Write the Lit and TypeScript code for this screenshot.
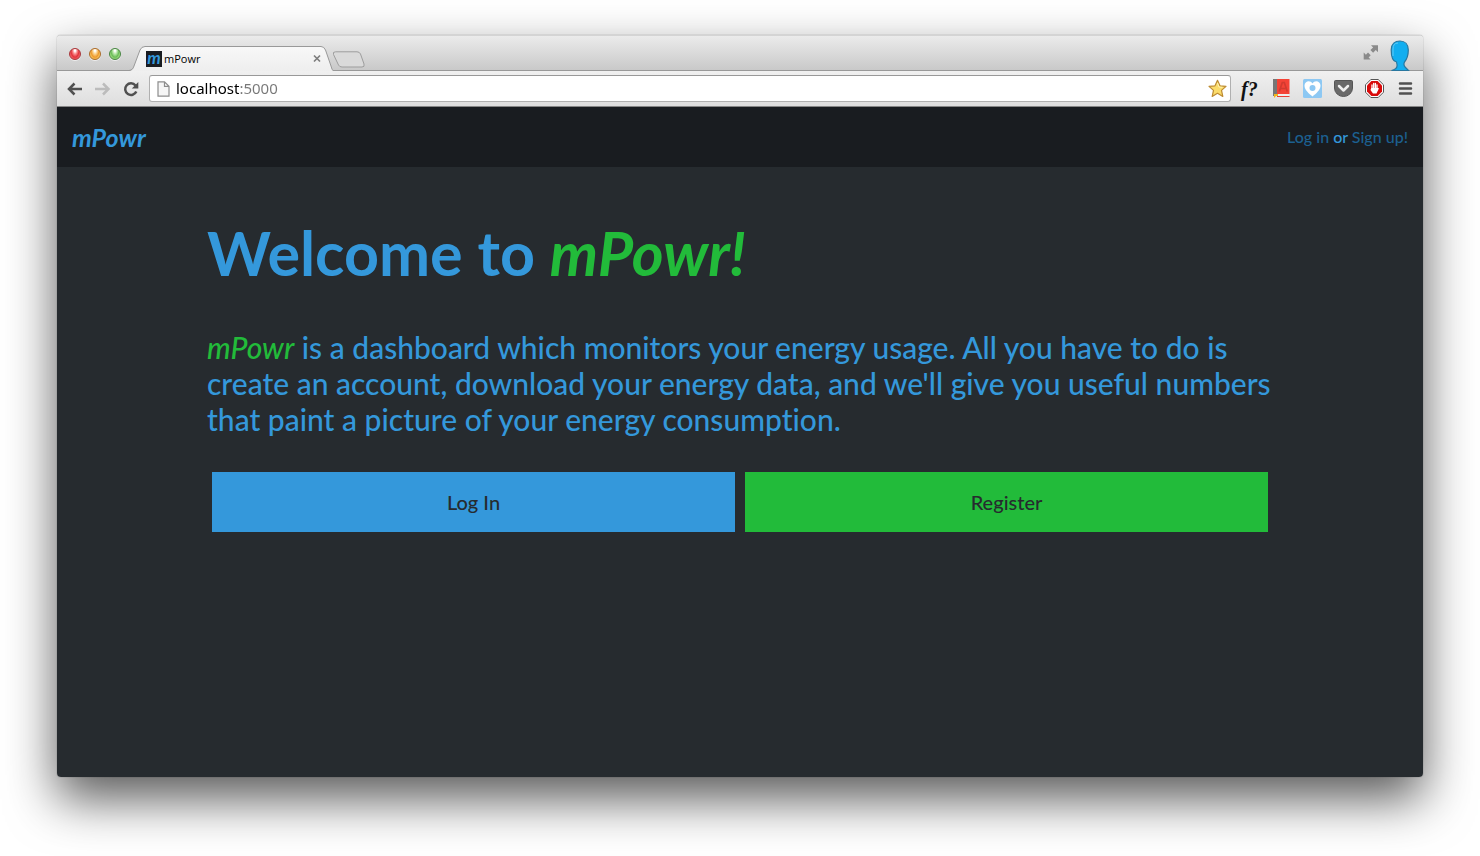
import { LitElement, html, css } from "lit";
import { customElement, property } from "lit/decorators.js";

@customElement("browser-tabs")
class BrowserTabs extends LitElement {
  @property() name = "";

  static styles = css`
    :host { display: block; }
    .strip {
      display: flex;
      align-items: flex-end;
      height: 36px;
      box-sizing: border-box;
      padding: 0 12px;
      background: linear-gradient(#d4d4d4 0 1px, #ebebeb 1px, #c9c9c9 35px, #999 35px);
      border-radius: 4px 4px 0 0;
    }
    .lights { display: flex; gap: 8px; padding-bottom: 11px; }
    .light {
      width: 12px; height: 12px; padding: 0;
      box-sizing: border-box;
      border-radius: 50%;
      border: 1px solid;
      box-shadow: 0 1px 0 #fff9;
    }
    .red { border-color: #a8363a; background: radial-gradient(ellipse at 50% 15%, #fff 0 8%, #f98b8b 30%, #e2343c 55%, #ff7e7e 90%); }
    .amber { border-color: #ab6b28; background: radial-gradient(ellipse at 50% 15%, #fff 0 8%, #fad28b 30%, #ee9a2e 55%, #ffe47c 90%); }
    .green { border-color: #478541; background: radial-gradient(ellipse at 50% 15%, #fff 0 8%, #b8e6a8 30%, #6bbd59 55%, #c4f59b 90%); }
    .tab { display: grid; width: 204px; height: 25px; margin-left: 8px; }
    .tab > * { grid-area: 1 / 1; }
    .title {
      display: flex; align-items: center; gap: 2px;
      padding: 0 11px 0 17px;
      font: 11px/16px "Open Sans", sans-serif;
      color: #000;
    }
    .favicon {
      width: 16px; height: 16px;
      background: #191c21; color: #3498db;
      font: italic bold 17px/14px Lato, sans-serif;
      text-align: center;
    }
    .label { flex: 1; }
    .close, .new, .full { border: 0; background: none; padding: 0; display: block; }
    .close { width: 9px; height: 9px; }
    .new { margin: 0 auto 3px -1px; height: 17px; }
    .full { margin: 0 10px 11px 0; height: 15px; }
    svg { display: block; }
  `;

  render() {
    return html`
      <div class="strip">
        <div class="lights">
          <button class="light red" aria-label="Close window"></button>
          <button class="light amber" aria-label="Minimise"></button>
          <button class="light green" aria-label="Zoom"></button>
        </div>
        <div class="tab">
          <svg width="204" height="25" viewBox="0 0 204 25">
            <defs><linearGradient id="g" x2="0" y2="1"><stop stop-color="#f8f8f8"/><stop offset="1" stop-color="#eeeeee"/></linearGradient></defs>
            <path d="M0 25C3 24.500 4 23 5 20L11 4Q12.500.5 16 .5H192Q195 .5 196.500 4L202 20Q203 24 204 25Z" fill="url(#g)"/>
            <path d="M0 24.500C3 24 4 23 5 20L11 4Q12.500.5 16 .5H192Q195 .5 196.500 4L202 20Q203 24 204 24.500" fill="none" stroke="#999"/>
          </svg>
          <div class="title">
            <span class="favicon">m</span>
            <span class="label">${this.name}</span>
            <button class="close" aria-label="Close tab">
              <svg width="9" height="9" viewBox="0 0 9 9"><path d="M1 1.500l6 6M7 1.500l-6 6" stroke="#7d7d7d" stroke-width="1.700"/></svg>
            </button>
          </div>
        </div>
        <button class="new" aria-label="New tab">
          <svg width="34" height="17" viewBox="0 0 34 17"><path d="M3.500.8H25Q27.500.8 28.500 3L32 13Q33 16 30 16H10Q7.500 16 6.500 14L1.500 3.500Q.5.8 3.500.8Z" fill="#dadada" stroke="#9d9d9d"/></svg>
        </button>
        <button class="full" aria-label="Full screen">
          <svg width="16" height="15" viewBox="0 0 16 15" fill="#8a8a8a"><path d="M8 .3h7v7l-2.200-2.200-2.700 2.700-2.700-2.700 2.700-2.700zM.7 14.500v-7l2.200 2.200L5 7.600l2.700 2.700-2.100 2.100 2.100 2.100z"/></svg>
        </button>
        <svg width="22" height="31" viewBox="0 0 22 31">
          <path d="M2.500 30.500C7 29.500 8.500 27.500 8 24.500L7.500 22C4 21.500 2.200 17 2.200 10 2.200 4 6 1 11 1s8.300 3.500 8.300 9c0 5-1.300 9-3.800 12-1 2-.5 4 1 5.500q1.500 1.500 3 3z" fill="#12aef0" stroke="#29779f" stroke-width="1.200"/>
          <path d="M4 16V9Q4 3 9 3" fill="none" stroke="#64c9f5"/>
        </svg>
      </div>
    `;
  }
}

@customElement("browser-toolbar")
class BrowserToolbar extends LitElement {
  @property() address = "";

  static styles = css`
    :host { display: block; }
    .bar {
      display: flex;
      align-items: center;
      height: 36px;
      box-sizing: border-box;
      padding: 0 8px 0 10px;
      background: linear-gradient(#f0f0f0, #dedede);
      border-bottom: 1px solid #868686;
    }
    button { border: 0; padding: 0; background: none; display: block; }
    svg { display: block; }
    .nav { display: flex; gap: 12px; }
    .omnibox {
      flex: 1;
      display: flex; align-items: center;
      height: 27px;
      box-sizing: border-box;
      margin: 0 10px;
      padding: 0 3px 0 7px;
      background: #fff;
      border: 1px solid #b0b0b0;
      border-top-color: #999;
      border-radius: 3px;
    }
    .url {
      flex: 1; min-width: 0;
      border: 0; outline: 0; padding: 0 0 2px; margin-left: 6px;
      font: 15px/20px "Noto Sans", sans-serif;
      color: transparent; caret-color: #000;
      background: linear-gradient(90deg, #000 63px, #777 63px);
      background-clip: text;
      -webkit-background-clip: text;
    }
    .extensions { display: flex; align-items: center; gap: 11px; }
    .fn { width: 21px; font: italic bold 20px/24px "Liberation Serif", serif; color: #111; white-space: nowrap; text-align: left; }
  `;

  render() {
    return html`
      <div class="bar">
        <div class="nav">
          <button aria-label="Back"><svg width="16" height="14" viewBox="0 0 16 14"><path d="M15 7H2M7.500 1.500L2 7 7.500 12.500" fill="none" stroke="#505050" stroke-width="2.500"/></svg></button>
          <button aria-label="Forward"><svg width="16" height="14" viewBox="0 0 16 14"><path d="M0 7H13M8 1.500L13.500 7 8 12.500" fill="none" stroke="#bcbcbc" stroke-width="2.500"/></svg></button>
          <button aria-label="Reload"><svg width="16" height="16" viewBox="0 0 16 16"><path d="M12.500 4.500A5.800 5.800 0 1 0 13.300 10.500" fill="none" stroke="#505050" stroke-width="2.500"/><path d="M15.300 1v6.500H8.800z" fill="#505050"/></svg></button>
        </div>
        <div class="omnibox">
          <svg width="13" height="16" viewBox="0 0 13 16"><path d="M1 .8H7.500L12 5.300V15.200H1ZM7.500.8V5.300H12" fill="#f6f6f6" stroke="#8d8d8d" stroke-width="1.200"/></svg>
          <input class="url" aria-label="Address" spellcheck="false" .value=${this.address} />
          <button aria-label="Bookmark"><svg width="19" height="19" viewBox="0 0 19 19"><path d="M9.500 1.300L12 6.800l6 .6-4.500 4 1.300 6-5.300-3.100-5.300 3.100 1.300-6L1 7.400l6-.6z" fill="#fbdc6b" stroke="#bd8b31" stroke-width="1.200" stroke-linejoin="round"/><path d="M9.500 4L11 8l3.500.3" fill="none" stroke="#fff3b5"/></svg></button>
        </div>
        <div class="extensions">
          <button class="fn" aria-label="Font finder">f?</button>
          <button aria-label="Dictionary"><svg width="18" height="19" viewBox="0 0 18 19"><path d="M0 0h4.500v17H0z" fill="#777"/><path d="M4 0h12.500v15H4z" fill="#f44336"/><path d="M6.300 12.500l3-9h2l3 9M7.500 9.500h5.500" fill="none" stroke="#d23a2f" stroke-width="1.700"/><path d="M4 15h12v2H4z" fill="#eee"/><path d="M4 17.500h12.500" stroke="#e83e34"/><path d="M1 15h4v2l-2 0L1 19z" fill="#f2b51c"/></svg></button>
          <button aria-label="Favourites"><svg width="21" height="19" viewBox="0 0 21 19"><rect x="1" width="19" height="19" rx="1.500" fill="#8dc8f3"/><path d="M10.500 17.500C7 14.500 2.500 11 2.500 6.500c0-4 5.500-6 8-2 2.500-4 8-2 8 2 0 4.500-4.500 8-8 11z" fill="#fff"/><circle cx="10.500" cy="9" r="3" fill="#8dc8f3"/></svg></button>
          <button aria-label="Pocket"><svg width="19" height="17" viewBox="0 0 19 17"><path d="M1.500.5h16q1 0 1 1V8a9 8.500 0 0 1-18 0V1.500q0-1 1-1z" fill="#696969" stroke="#555"/><path d="M5 6l4.500 4.500L14 6" fill="none" stroke="#eee" stroke-width="2.500" stroke-linecap="round" stroke-linejoin="round"/></svg></button>
          <button aria-label="Ad blocker"><svg width="21" height="21" viewBox="0 0 21 21"><path d="M6.800 1.500h7.400l5.300 5.300v7.400l-5.300 5.300H6.800l-5.300-5.300V6.800z" fill="#fff" stroke="#555"/><path d="M7.400 3h6.200L18 7.400v6.200L13.600 18H7.400L3 13.600V7.400z" fill="#d90b0b"/><path d="M8 7v5M9.700 5.500V11M11.400 5.500v6M13 7V12" stroke="#fff" stroke-width="1.300" stroke-linecap="round"/><path d="M7.300 10h6.400l1.300.3-2.500 5.200H9L6.500 12z" fill="#fff"/></svg></button>
          <button aria-label="Menu"><svg width="19" height="15" viewBox="0 0 19 15"><path d="M4 2.500h11M4 7.500h11M4 12.500h11" stroke="#505050" stroke-width="2.500" stroke-linecap="round"/></svg></button>
        </div>
      </div>
    `;
  }
}

@customElement("welcome-page")
class WelcomePage extends LitElement {
  static styles = css`
    :host {
      display: block;
      background: #262b2f;
      color: #3498db;
      font-family: Lato, sans-serif;
      font-weight: 500;
      font-variant-ligatures: none;
    }
    header {
      display: flex;
      align-items: center;
      justify-content: space-between;
      height: 60px;
      padding: 0 15px;
      background: #191c20;
    }
    .brand { font-size: 25px; font-weight: 700; font-style: italic; color: #3498db; text-decoration: none; }
    .account { font-size: 16px; line-height: 20px; }
    .account a { color: #1c6090; text-decoration: none; }
    main { margin: 0 150px; padding-top: 50px; }
    h1 { margin: 0; font-size: 61px; line-height: 72px; font-weight: 700; }
    em { color: #22bb3a; }
    p { margin: 40px 0 30px; font-size: 30px; line-height: 36px; }
    .actions { display: flex; gap: 10px; padding: 5px; }
    .actions button {
      flex: 1;
      height: 60px;
      border: 0;
      background: #3498db;
      color: #262b2f;
      font: 500 20px/24px Lato, sans-serif;
    }
    .actions .register { background: #22bb3a; }
  `;

  render() {
    return html`
      <header>
        <a class="brand" href="#home">mPowr</a>
        <div class="account"><a href="#login">Log in</a> or <a href="#signup">Sign up!</a></div>
      </header>
      <main>
        <h1>Welcome to <em>mPowr!</em></h1>
        <p><em>mPowr</em> is a dashboard which monitors your energy usage. All you have to do is create an account, download your energy data, and we'll give you useful numbers that paint a picture of your energy consumption.</p>
        <div class="actions">
          <button>Log In</button>
          <button class="register">Register</button>
        </div>
      </main>
    `;
  }
}

@customElement("app-root")
class AppRoot extends LitElement {
  static styles = css`
    :host {
      display: flex;
      box-sizing: border-box;
      min-height: 100vh;
      padding: 35px 57px 79px;
      background: #fff;
      overflow: hidden;
    }
    .window {
      flex: 1;
      display: flex;
      flex-direction: column;
      border-radius: 4px;
      box-shadow: 0 0 1px #0009, 0 22px 50px #000000a6;
    }
    .page { flex: 1; border-radius: 0 0 4px 4px; }
  `;

  render() {
    return html`
      <div class="window">
        <browser-tabs name="mPowr"></browser-tabs>
        <browser-toolbar address="localhost:5000"></browser-toolbar>
        <welcome-page class="page"></welcome-page>
      </div>
    `;
  }
}
